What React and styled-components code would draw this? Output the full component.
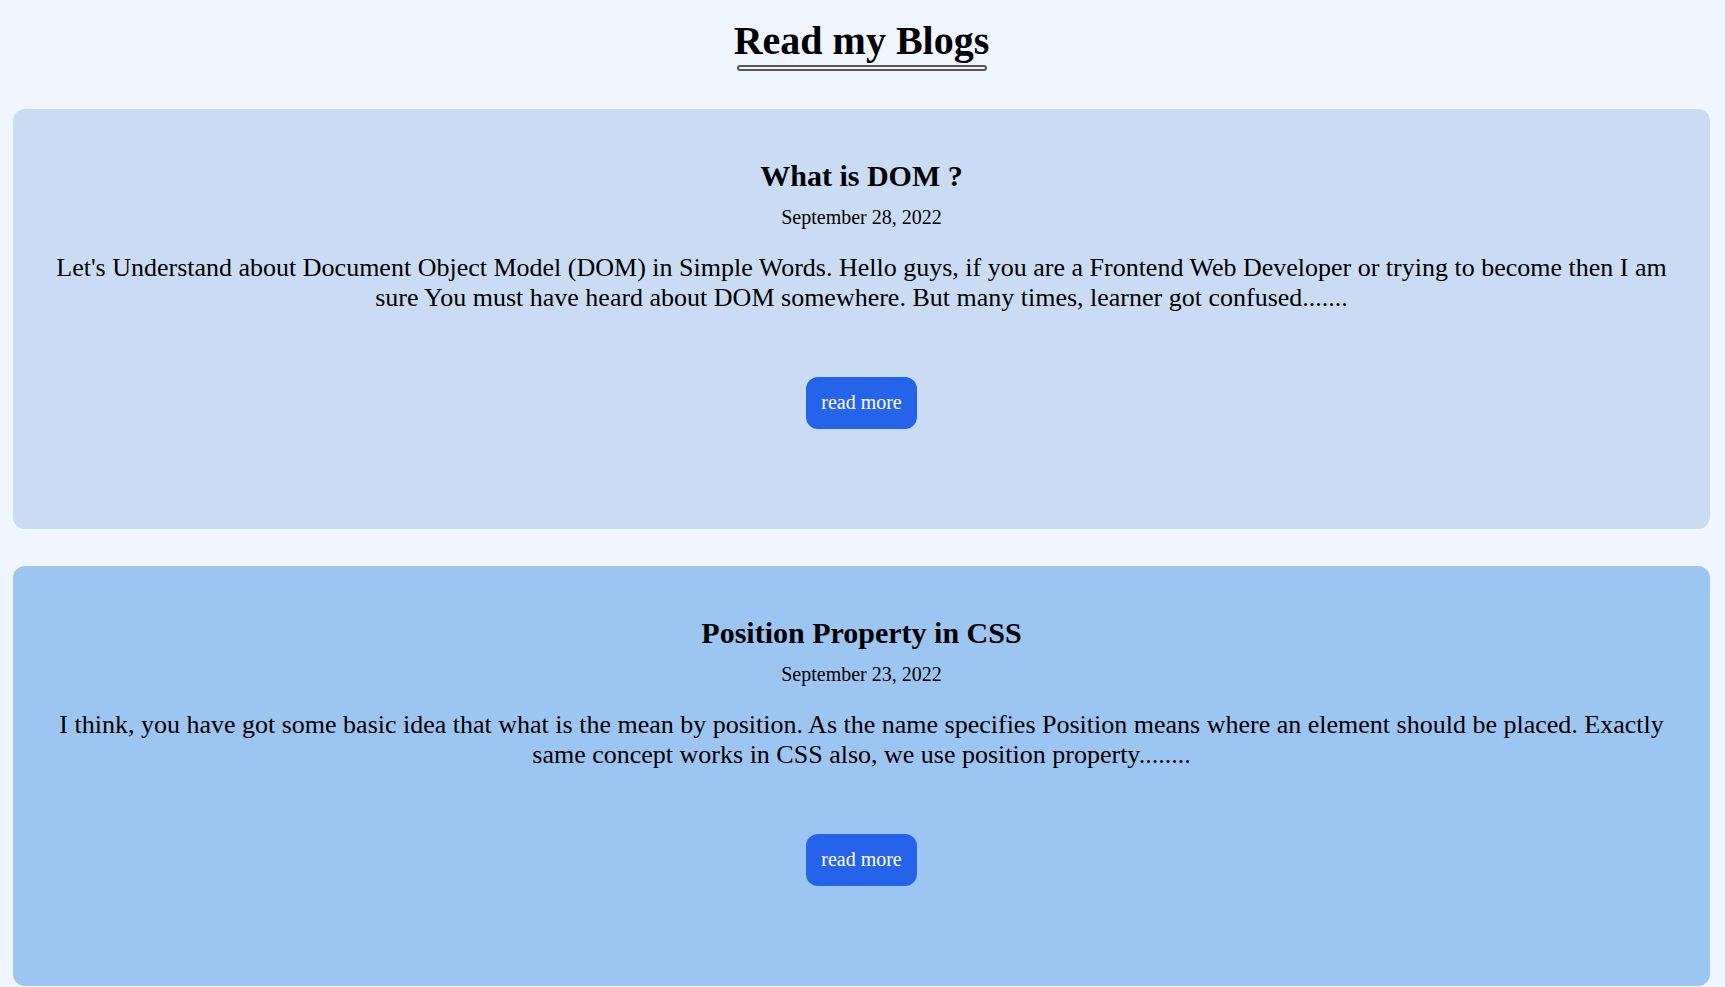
import React from 'react';
import styled, { createGlobalStyle } from 'styled-components';

const GlobalStyle = createGlobalStyle`
  html, body {
    margin: 0;
    padding: 0;
    background: #eff6ff;
  }
  body {
    font-family: "Liberation Serif", "Times New Roman", serif;
    color: #000;
  }
`;

const Page = styled.div`
  display: flex;
  flex-direction: column;
  align-items: center;
  padding: 18px 15px 2px 13px;
`;

const TitleWrap = styled.div`
  display: inline-flex;
  flex-direction: column;
  align-items: stretch;
  margin-bottom: 38px;
`;

const PageTitle = styled.h1`
  margin: 0;
  font-size: 40px;
  font-weight: 700;
  line-height: 46px;
  text-align: center;
`;

const Underline = styled.div`
  height: 2px;
  margin: 1px 2px 0 3px;
  border: 2px solid #555;
  border-radius: 4px;
  background: #f4f4f4;
`;

const List = styled.div`
  align-self: stretch;
  display: flex;
  flex-direction: column;
  gap: 37px;
`;

const Card = styled.article`
  height: 420px;
  box-sizing: border-box;
  padding: 50px 40px 0;
  border-radius: 12px;
  background: ${(p) => p.$bg};
  display: flex;
  flex-direction: column;
  align-items: center;
  text-align: center;
`;

const CardTitle = styled.h2`
  margin: 0;
  font-size: 30px;
  font-weight: 700;
  line-height: 34.5px;
`;

const CardDate = styled.p`
  margin: 12px 0 0;
  font-size: 20px;
  line-height: 23px;
`;

const Excerpt = styled.p`
  margin: 24px 0 0;
  font-size: 26px;
  line-height: 30px;
`;

const ReadMore = styled.button`
  margin-top: 64px;
  padding: 14px 15px 15px;
  border: none;
  border-radius: 12px;
  background: #2563eb;
  color: #fff;
  font-family: "Liberation Serif", "Times New Roman", serif;
  font-size: 20px;
  line-height: 23px;
  cursor: pointer;
`;

const posts = [
  {
    title: 'What is DOM ?',
    date: 'September 28, 2022',
    excerpt:
      "Let's Understand about Document Object Model (DOM) in Simple Words. Hello guys, if you are a Frontend Web Developer or trying to become then I am sure You must have heard about DOM somewhere. But many times, learner got confused.......",
    bg: '#cadcf4',
  },
  {
    title: 'Position Property in CSS',
    date: 'September 23, 2022',
    excerpt:
      'I think, you have got some basic idea that what is the mean by position. As the name specifies Position means where an element should be placed. Exactly same concept works in CSS also, we use position property........',
    bg: '#9dc5f1',
  },
];

export default function App() {
  return (
    <>
      <GlobalStyle />
      <Page>
        <TitleWrap>
          <PageTitle>Read my Blogs</PageTitle>
          <Underline />
        </TitleWrap>
        <List>
          {posts.map((post) => (
            <Card key={post.title} $bg={post.bg}>
              <CardTitle>{post.title}</CardTitle>
              <CardDate>{post.date}</CardDate>
              <Excerpt>{post.excerpt}</Excerpt>
              <ReadMore>read more</ReadMore>
            </Card>
          ))}
        </List>
      </Page>
    </>
  );
}
